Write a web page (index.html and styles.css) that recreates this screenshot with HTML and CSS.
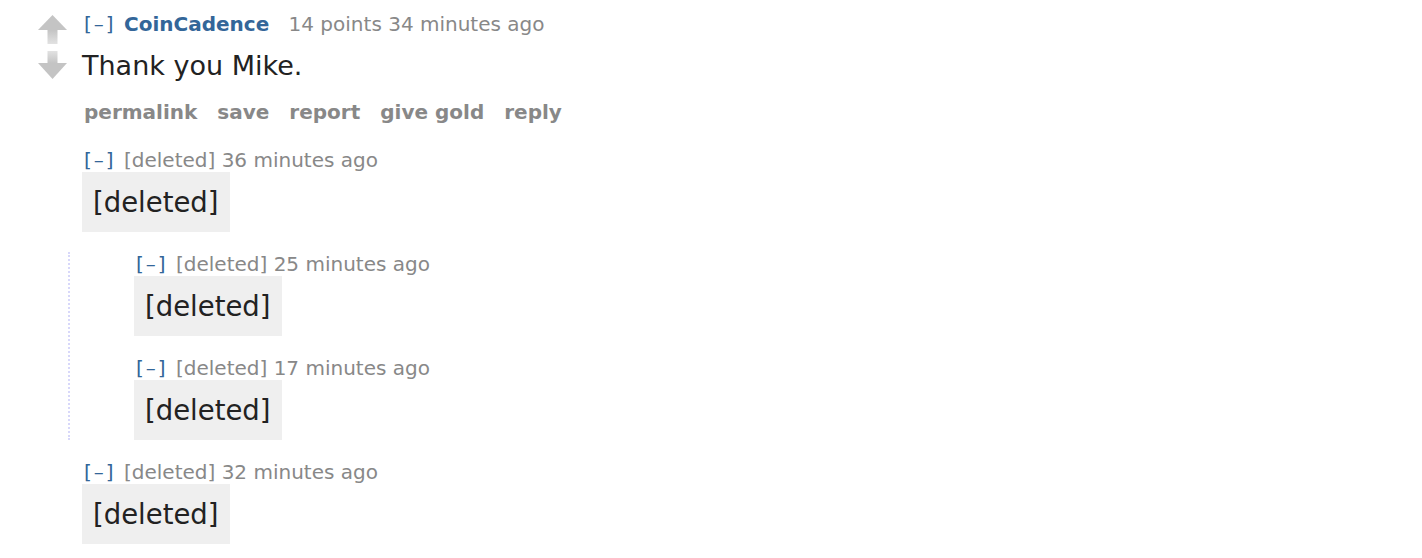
FILE: index.html
```html
<!DOCTYPE html>
<html lang="en">
<head>
    <meta charset="UTF-8">
    <title>Comment thread</title>
    <link rel="stylesheet" href="styles.css">
</head>
<body>

    <div class="comment top">
        <div class="midcol">
            <svg class="arrow" width="31" height="29" viewBox="0 0 31 29">
                <defs>
                    <linearGradient id="stem-up" x1="0" y1="0" x2="0" y2="1">
                        <stop offset="0" stop-color="#c4c4c4"/>
                        <stop offset="1" stop-color="#e2e2e2"/>
                    </linearGradient>
                </defs>
                <polygon points="15.5,0 30,15 1,15" fill="#c4c4c4"/>
                <rect x="10.5" y="15" width="10" height="14" fill="url(#stem-up)"/>
            </svg>
            <svg class="arrow" width="31" height="29" viewBox="0 0 31 29">
                <defs>
                    <linearGradient id="stem-down" x1="0" y1="0" x2="0" y2="1">
                        <stop offset="0" stop-color="#e2e2e2"/>
                        <stop offset="1" stop-color="#c4c4c4"/>
                    </linearGradient>
                </defs>
                <rect x="10.5" y="0" width="10" height="12" fill="url(#stem-down)"/>
                <polygon points="1,12 30,12 15.5,28" fill="#c4c4c4"/>
            </svg>
        </div>

        <div class="entry">
            <p class="tagline">
                <a class="expand" href="#">[–]</a>
                <a class="author" href="#">CoinCadence</a>
                <span class="score">14 points</span> 34 minutes ago
            </p>
            <div class="usertext">Thank you Mike.</div>
            <ul class="buttons">
                <li><a href="#">permalink</a></li>
                <li><a href="#">save</a></li>
                <li><a href="#">report</a></li>
                <li><a href="#">give gold</a></li>
                <li><a href="#">reply</a></li>
            </ul>

            <div class="comment">
                <p class="tagline"><a class="expand" href="#">[–]</a> <em class="deleted">[deleted]</em> 36 minutes ago</p>
                <div class="usertext grayed">[deleted]</div>
            </div>
        </div>
    </div>

    <div class="child">
        <div class="comment">
            <p class="tagline"><a class="expand" href="#">[–]</a> <em class="deleted">[deleted]</em> 25 minutes ago</p>
            <div class="usertext grayed">[deleted]</div>
        </div>
        <div class="comment">
            <p class="tagline"><a class="expand" href="#">[–]</a> <em class="deleted">[deleted]</em> 17 minutes ago</p>
            <div class="usertext grayed">[deleted]</div>
        </div>
    </div>

    <div class="comment sibling">
        <p class="tagline"><a class="expand" href="#">[–]</a> <em class="deleted">[deleted]</em> 32 minutes ago</p>
        <div class="usertext grayed">[deleted]</div>
    </div>

</body>
</html>
```

FILE: styles.css
```css
* {
    margin: 0;
    padding: 0;
    box-sizing: border-box;
}

body {
    background: #fff;
    color: #222;
    font-family: "DejaVu Sans", Verdana, sans-serif;
    font-size: 20px;
}

a {
    text-decoration: none;
}

.top {
    display: flex;
    padding-top: 12px;
}

.midcol {
    width: 82px;
    padding: 3px 0 0 37px;
    display: flex;
    flex-direction: column;
    gap: 7px;
}

.arrow {
    display: block;
}

.entry {
    flex: 1;
}

.tagline {
    height: 24px;
    line-height: 24px;
    padding-left: 2px;
    color: #888;
    font-size: 20px;
}

.tagline .expand {
    color: #369;
    letter-spacing: 2px;
    margin-right: 2px;
}

.tagline .author {
    color: #369;
    font-weight: bold;
    margin-right: 13px;
}

.tagline .deleted {
    font-style: normal;
}

.usertext {
    font-size: 27px;
    line-height: 36px;
    height: 36px;
    margin-top: 12px;
}

.usertext.grayed {
    display: inline-block;
    background: #efefef;
    font-size: 27.5px;
    height: 60px;
    line-height: 60px;
    margin-top: 0;
    padding: 0 11px;
}

.buttons {
    list-style: none;
    display: flex;
    gap: 20px;
    height: 24px;
    line-height: 24px;
    margin-top: 16px;
    padding-left: 2px;
}

.buttons a {
    color: #888;
    font-weight: bold;
    font-size: 20px;
}

.comment .comment {
    margin-top: 24px;
}

.child {
    margin: 20px 0 0 68px;
    padding-left: 64px;
    border-left: 2px dotted #d8d8fa;
    display: flex;
    flex-direction: column;
    gap: 20px;
}

.sibling {
    margin: 20px 0 0 82px;
}
```
